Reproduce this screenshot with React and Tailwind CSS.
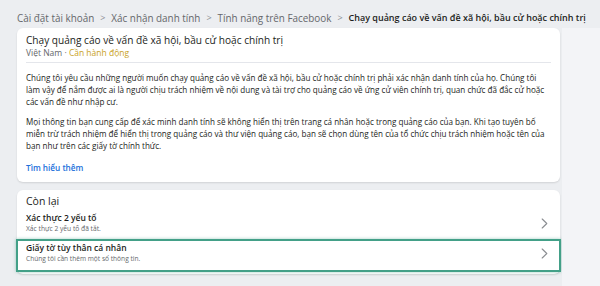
import React from "react";

const FONT = { fontFamily: '"Open Sans", "Noto Sans", Arial, sans-serif' };

const para1 = [
  "Chúng tôi yêu cầu những người muốn chạy quảng cáo về vấn đề xã hội, bầu cử hoặc chính trị phải xác nhận danh tính của họ. Chúng tôi",
  "làm vậy để nắm được ai là người chịu trách nhiệm về nội dung và tài trợ cho quảng cáo về ứng cử viên chính trị, quan chức đã đắc cử hoặc",
  "các vấn đề như nhập cư.",
];
const para2 = [
  "Mọi thông tin bạn cung cấp để xác minh danh tính sẽ không hiển thị trên trang cá nhân hoặc trong quảng cáo của bạn. Khi tạo tuyên bố",
  "miễn trừ trách nhiệm để hiển thị trong quảng cáo và thư viện quảng cáo, bạn sẽ chọn dùng tên của tổ chức chịu trách nhiệm hoặc tên của",
  "bạn như trên các giấy tờ chính thức.",
];

function Chevron() {
  return (
    <svg width="7" height="11" viewBox="0 0 7 11" fill="none" className="shrink-0">
      <path d="M1.2 1 L5.8 5.5 L1.2 10" stroke="#8a8d91" strokeWidth="1.1" strokeLinecap="round" strokeLinejoin="round" />
    </svg>
  );
}

function Sep() {
  return <span className="mx-[6px] text-[#8a8d91] text-[9px]">&gt;</span>;
}

export default function App() {
  return (
    <div className="w-[600px] h-[286px] overflow-hidden bg-[#eceef1]" style={FONT}>
      <div className="h-[28px] pt-[7px] pl-[17px] flex items-center text-[9.9px] leading-[14px] whitespace-nowrap text-[#65676b]">
        <span>Cài đặt tài khoản</span>
        <Sep />
        <span>Xác nhận danh tính</span>
        <Sep />
        <span>Tính năng trên Facebook</span>
        <Sep />
        <span className="text-[#1c1e21] font-semibold text-[9px]">Chạy quảng cáo về vấn đề xã hội, bầu cử hoặc chính trị</span>
      </div>
      <div className="flex">
        <div className="w-[562px] pl-[17px] flex flex-col gap-[8px]">
          <div className="w-[543px] bg-white rounded-[6px] shadow-[0_1px_2px_rgba(0,0,0,0.12)] px-[9px] pt-[5px] pb-[8px]">
            <div className="text-[10.1px] leading-[14px] font-medium text-[#1c1e21] whitespace-nowrap">
              Chạy quảng cáo về vấn đề xã hội, bầu cử hoặc chính trị
            </div>
            <div className="text-[8.5px] leading-[10px] text-[#65676b] mt-[1px] whitespace-nowrap">
              Việt Nam · <span className="text-[#c9a227]">Cần hành động</span>
            </div>
            <div className="h-px bg-[#e4e6eb] mt-[4px]" />
            <div className="mt-[9px] text-[8.1px] leading-[12px] text-[#1c1e21]">
              {para1.map((l, i) => (
                <div key={i} className="whitespace-nowrap">{l}</div>
              ))}
            </div>
            <div className="mt-[8px] text-[8.1px] leading-[12px] text-[#1c1e21]">
              {para2.map((l, i) => (
                <div key={i} className="whitespace-nowrap">{l}</div>
              ))}
            </div>
            <div className="mt-[10px] text-[8.2px] leading-[12px] font-semibold text-[#216fdb]">Tìm hiểu thêm</div>
          </div>
          <div className="w-[543px] bg-white rounded-[6px] shadow-[0_1px_2px_rgba(0,0,0,0.12)] pt-[4px] pb-[2px]">
            <div className="px-[9px] text-[10.5px] leading-[14px] text-[#1c1e21]">Còn lại</div>
            <div className="px-[9px] pt-[4px] pb-[3px] flex items-center justify-between">
              <div>
                <div className="text-[8.5px] leading-[12px] font-semibold text-[#1c1e21]">Xác thực 2 yếu tố</div>
                <div className="text-[6.7px] leading-[10px] text-[#65676b]">Xác thực 2 yếu tố đã tắt.</div>
              </div>
              <div className="pr-[3px]"><Chevron /></div>
            </div>
            <div className="-mx-[1px] mt-[2px] border-2 border-[#43a088] shadow-[0_0_3px_rgba(67,160,136,0.5)] px-[8px] pt-[1px] pb-[6px] flex items-center justify-between">
              <div>
                <div className="text-[8.5px] leading-[12px] font-semibold text-[#1c1e21]">Giấy tờ tùy thân cá nhân</div>
                <div className="text-[6.6px] leading-[10px] text-[#65676b]">Chúng tôi cần thêm một số thông tin.</div>
              </div>
              <div className="pr-[3px]"><Chevron /></div>
            </div>
          </div>
        </div>
        <div className="flex-1 h-[260px] bg-[#f3f4f7]" />
      </div>
    </div>
  );
}
